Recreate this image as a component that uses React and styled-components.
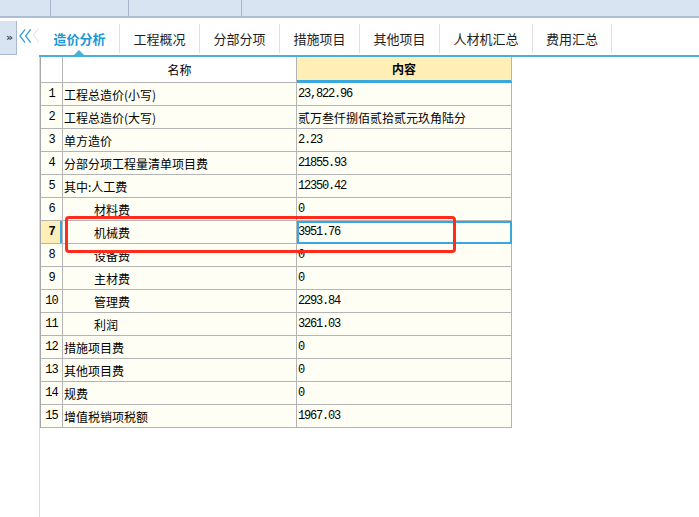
import React from 'react'
import styled, { createGlobalStyle } from 'styled-components'

const GlobalStyle = createGlobalStyle`
  html, body {
    margin: 0;
    padding: 0;
    background: #fff;
  }
  body {
    font-family: "Noto Sans CJK SC", "Liberation Sans", sans-serif;
    font-size: 12px;
    color: #000;
  }
`

const rows = [
  { no: 1, name: '工程总造价(小写)', value: '23,822.96' },
  { no: 2, name: '工程总造价(大写)', value: '贰万叁仟捌佰贰拾贰元玖角陆分' },
  { no: 3, name: '单方造价', value: '2.23' },
  { no: 4, name: '分部分项工程量清单项目费', value: '21855.93' },
  { no: 5, name: '其中:人工费', value: '12350.42' },
  { no: 6, name: '材料费', value: '0', indent: true },
  { no: 7, name: '机械费', value: '3951.76', indent: true, selected: true },
  { no: 8, name: '设备费', value: '0', indent: true },
  { no: 9, name: '主材费', value: '0', indent: true },
  { no: 10, name: '管理费', value: '2293.84', indent: true },
  { no: 11, name: '利润', value: '3261.03', indent: true },
  { no: 12, name: '措施项目费', value: '0' },
  { no: 13, name: '其他项目费', value: '0' },
  { no: 14, name: '规费', value: '0' },
  { no: 15, name: '增值税销项税额', value: '1967.03' },
]

const tabs = [
  { label: '造价分析', width: 80, active: true },
  { label: '工程概况', width: 80 },
  { label: '分部分项', width: 80 },
  { label: '措施项目', width: 80 },
  { label: '其他项目', width: 80 },
  { label: '人材机汇总', width: 93 },
  { label: '费用汇总', width: 79 },
]

const isNumber = (v) => /^[\d,.]+$/.test(v)

const App = () => {
  return <Page>
    <GlobalStyle />
    {/* top strip */}
    <TopStrip>
      <StripCell $width={51} />
      <StripCell $width={78} />
      <StripCell $width={113} />
    </TopStrip>
    <Body>
      {/* left rail */}
      <LeftRail>
        <ToggleBox>»</ToggleBox>
        <Collapse width='14' height='16' viewBox='0 0 14 16'>
          <polyline points='6.5,1 1,8 6.5,15' fill='none' stroke='#2f9bd9' strokeWidth='1.3' />
          <polyline points='12.5,1 7,8 12.5,15' fill='none' stroke='#2f9bd9' strokeWidth='1.3' />
        </Collapse>
        <Notch width='6' height='16' viewBox='0 0 6 16'>
          <polyline points='6,0 0.5,7 6,14' fill='none' stroke='#dcdcdc' strokeWidth='1' />
        </Notch>
      </LeftRail>
      <Main>
        {/* tabs */}
        <TabBar>
          {tabs.map((t) => {
            return <Tab key={t.label} $width={t.width} $active={t.active}>
              {t.label}
              {t.active ? <Pointer /> : null}
            </Tab>
          })}
        </TabBar>
        {/* sheet */}
        <Sheet>
          <Grid>
            <Row $head>
              <NumCell $head />
              <HeadName>名称</HeadName>
              <HeadContent>内容</HeadContent>
            </Row>
            {rows.map((r) => {
              return <Row key={r.no}>
                <NumCell $current={r.selected}>{r.no}</NumCell>
                <NameCell $indent={r.indent}>{r.name}</NameCell>
                <ValueCell $selected={r.selected}>
                  {isNumber(r.value) ? <Mono>{r.value}</Mono> : r.value}
                </ValueCell>
              </Row>
            })}
            <Marker />
          </Grid>
        </Sheet>
      </Main>
    </Body>
  </Page>
}

const Page = styled.div`
  width: 699px;
  height: 517px;
  display: flex;
  flex-direction: column;
  overflow: hidden;
`

const TopStrip = styled.div`
  height: 18px;
  flex: none;
  box-sizing: border-box;
  display: flex;
  background: #d8e4f2;
  border-bottom: 2px solid #aebdd1;
`

const StripCell = styled.div`
  width: ${(p) => p.$width}px;
  box-sizing: border-box;
  border-right: 1px solid #a6b5ca;
`

const Body = styled.div`
  flex: 1;
  display: flex;
  min-height: 0;
`

const LeftRail = styled.div`
  width: 39px;
  flex: none;
  display: flex;
  align-items: flex-start;
  padding-top: 3px;
  box-sizing: border-box;
`

const ToggleBox = styled.div`
  width: 18px;
  height: 34px;
  box-sizing: border-box;
  background: #d9e4f2;
  border-right: 1px solid #a9b9cd;
  border-bottom: 1px solid #a9b9cd;
  display: flex;
  align-items: center;
  justify-content: center;
  padding-left: 3px;
  font-family: "DejaVu Sans", sans-serif;
  font-size: 11px;
  font-weight: bold;
  color: #444;
`

const Collapse = styled.svg`
  margin: 7px 0 0 2px;
`

const Notch = styled.svg`
  margin: 7px 0 0 1px;
`

const Main = styled.div`
  flex: 1;
  display: flex;
  flex-direction: column;
  min-width: 0;
`

const TabBar = styled.div`
  height: 39px;
  flex: none;
  box-sizing: border-box;
  display: flex;
  align-items: flex-start;
  padding: 6px 0 0 1px;
  border-bottom: 2px solid #45b0e0;
`

const Tab = styled.div`
  position: relative;
  width: ${(p) => p.$width}px;
  height: 29px;
  box-sizing: border-box;
  border-right: 1px solid #e0e0e0;
  display: flex;
  align-items: center;
  justify-content: center;
  font-size: 13px;
  font-weight: ${(p) => (p.$active ? 'bold' : 'normal')};
  color: ${(p) => (p.$active ? '#1a98d5' : '#1e1e1e')};
`

const Pointer = styled.span`
  position: absolute;
  left: 50%;
  bottom: -2px;
  margin-left: -6px;
  width: 0;
  height: 0;
  border-left: 5px solid transparent;
  border-right: 5px solid transparent;
  border-bottom: 5px solid #45b0e0;
`

const Sheet = styled.div`
  flex: 1;
  border-left: 1px solid #dadada;
`

const Grid = styled.div`
  position: relative;
  width: 472px;
  box-sizing: border-box;
  border-left: 1px solid #a8a8a8;
`

const Row = styled.div`
  display: grid;
  grid-template-columns: 22px 234px 215px;
  height: ${(p) => (p.$head ? 26 : 23)}px;
`

const Cell = styled.div`
  box-sizing: border-box;
  border-right: 1px solid #b4b4b4;
  border-bottom: 1px solid #b4b4b4;
  background: #fffef4;
  display: flex;
  align-items: center;
  white-space: nowrap;
  overflow: hidden;
`

const NumCell = styled(Cell)`
  justify-content: center;
  font-family: "Liberation Mono", monospace;
  font-size: 12px;
  letter-spacing: -1px;
  background: ${(p) => (p.$current ? '#ffeeb5' : p.$head ? '#fff' : '#fffef4')};
  font-weight: ${(p) => (p.$current ? 'bold' : 'normal')};
  box-shadow: ${(p) => (p.$current ? 'inset -2px 0 0 #3aa8de' : 'none')};
`

const NameCell = styled(Cell)`
  padding-left: ${(p) => (p.$indent ? 31 : 1)}px;
`

const ValueCell = styled(Cell)`
  padding-left: 1px;
  outline: ${(p) => (p.$selected ? '2px solid #3aa8de' : 'none')};
  outline-offset: -2px;
`

const HeadName = styled(Cell)`
  justify-content: center;
  background: #fff;
`

const HeadContent = styled(Cell)`
  justify-content: center;
  background: #ffeeb5;
  font-weight: bold;
  border-bottom: 3px solid #3aa8de;
`

const Mono = styled.span`
  font-family: "Liberation Mono", monospace;
  font-size: 12px;
  letter-spacing: -1.2px;
`

const Marker = styled.div`
  position: absolute;
  left: 24px;
  top: 159px;
  width: 391px;
  height: 37px;
  box-sizing: border-box;
  border: 3px solid #ff2b1c;
  border-radius: 4px;
  pointer-events: none;
`

export default App
